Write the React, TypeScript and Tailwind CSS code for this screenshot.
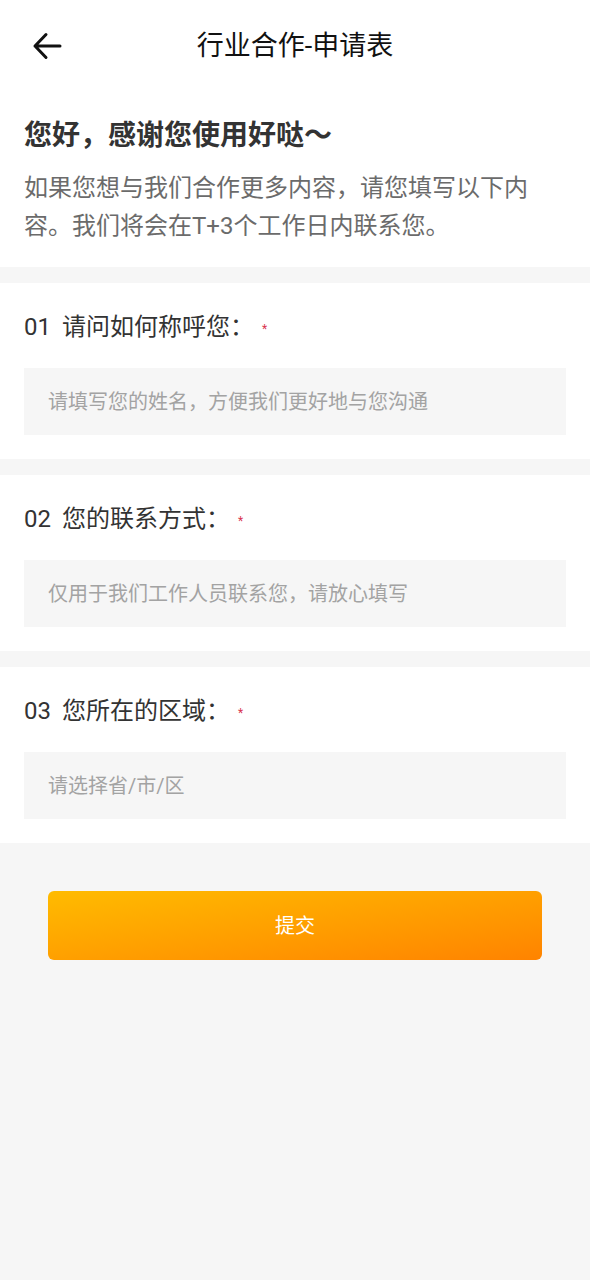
const fields = [
  { no: '01', label: '请问如何称呼您：', placeholder: '请填写您的姓名，方便我们更好地与您沟通' },
  { no: '02', label: '您的联系方式：', placeholder: '仅用于我们工作人员联系您，请放心填写' },
  { no: '03', label: '您所在的区域：', placeholder: '请选择省/市/区' },
];

function BackArrow() {
  return (
    <svg width="30" height="28" viewBox="0 0 30 28" fill="none">
      <path d="M14 2.5L3 14l11 11.5M3 14h25" stroke="#111" strokeWidth="3" strokeLinecap="round" strokeLinejoin="round" />
    </svg>
  );
}

export default function App() {
  return (
    <div
      className="min-h-screen w-[590px] bg-[#f6f6f6] flex flex-col gap-4"
      style={{ fontFamily: 'Roboto, "Noto Sans CJK SC", sans-serif' }}
    >
      <div className="bg-white">
        {/* header */}
        <div className="h-[92px] grid grid-cols-[1fr_auto_1fr] items-center">
          <div className="pl-[32px] flex items-center">
            <BackArrow />
          </div>
          <h1 className="text-[27px] leading-none text-[#111]">行业合作-申请表</h1>
          <div />
        </div>

        <div className="px-6 pt-[26px] pb-[22px]">
          <h2 className="text-[28px] leading-[36px] font-bold text-[#333]">您好，感谢您使用好哒～</h2>
          <p className="mt-[15px] w-[515px] text-[24px] leading-[38px] text-[#6b6b6b]">
            如果您想与我们合作更多内容，请您填写以下内容。我们将会在T+3个工作日内联系您。
          </p>
        </div>
      </div>

      {fields.map((f) => (
        <div key={f.no} className="bg-white px-6 pt-7 pb-6">
          <div className="flex items-center h-8 text-[24px] leading-8 text-[#333]">
            <span className="w-[38px]">{f.no}</span>
            <span>{f.label}</span>
            <span className="ml-[8px] mt-1 text-[12px] leading-none text-[#d9344f]">*</span>
          </div>
          <div className="mt-[25px] h-[67px] bg-[#f6f6f6] flex items-center px-6 text-[20px] text-[#a3a3a3]">
            {f.placeholder}
          </div>
        </div>
      ))}

      <div className="px-12 pt-8">
        <button className="w-full h-[69px] rounded-md bg-gradient-to-br from-[#ffbb00] to-[#ff8300] text-white text-[20px]">
          提交
        </button>
      </div>
    </div>
  );
}
